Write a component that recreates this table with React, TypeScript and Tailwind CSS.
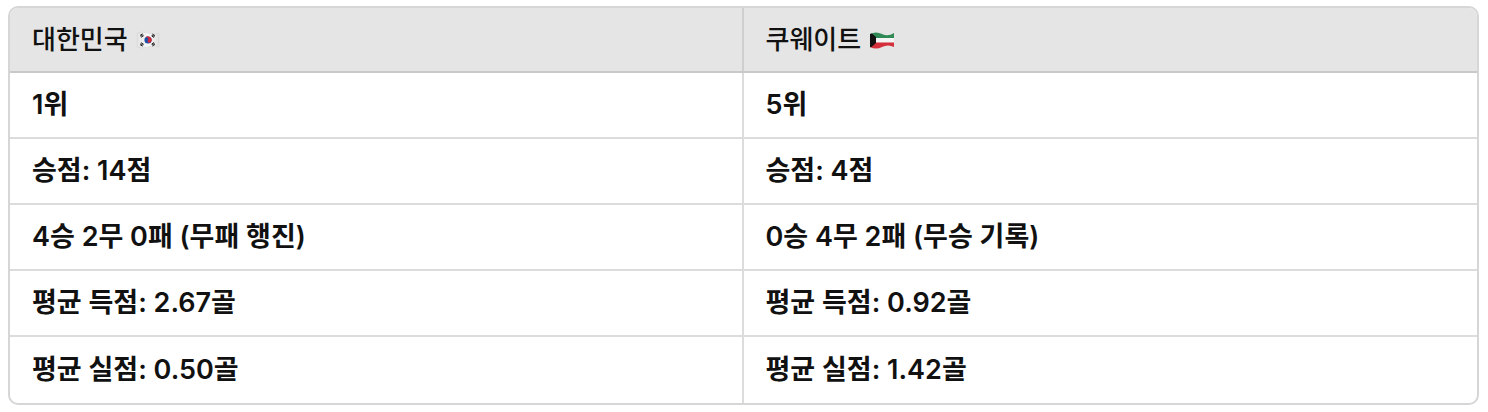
import React from "react";

const KoreaFlag = () => (
  <svg width="24" height="18" viewBox="0 0 24 18" className="inline-block">
    <defs>
      <linearGradient id="shadeK" x1="0" x2="1" y1="0" y2="0">
        <stop offset="0" stopColor="#000" stopOpacity="0.08" />
        <stop offset="0.5" stopColor="#000" stopOpacity="0" />
        <stop offset="1" stopColor="#000" stopOpacity="0.1" />
      </linearGradient>
    </defs>
    <path d="M1 2 Q6 0 12 2 T23 2 L23 16 Q18 14 12 16 T1 16 Z" fill="#f7f7f7" stroke="#d8d8d8" strokeWidth="0.5" />
    <circle cx="12" cy="9" r="3.6" fill="#1f4fa8" />
    <path d="M8.4 9 A3.6 3.6 0 0 1 15.6 9 A1.8 1.8 0 0 1 12 9 A1.8 1.8 0 0 0 8.4 9 Z" fill="#d62a36" transform="rotate(30 12 9)" />
    <g stroke="#222" strokeWidth="1">
      <path d="M4 4.5 L6.5 2.8 M4.6 5.4 L7.1 3.7 M5.2 6.3 L7.7 4.6" />
      <path d="M16.5 3 L19 4.7 M16 3.9 L18.5 5.6 M15.5 4.8 L18 6.5" />
      <path d="M4 13.5 L6.5 15.2 M4.6 12.6 L7.1 14.3 M5.2 11.7 L7.7 13.4" />
      <path d="M16.5 15 L19 13.3 M16 14.1 L18.5 12.4 M15.5 13.2 L18 11.5" />
    </g>
    <path d="M1 2 Q6 0 12 2 T23 2 L23 16 Q18 14 12 16 T1 16 Z" fill="url(#shadeK)" />
  </svg>
);

const KuwaitFlag = () => (
  <svg width="26" height="18" viewBox="0 0 26 18" className="inline-block">
    <defs>
      <clipPath id="kwClip">
        <path d="M1 3 Q7 0 13 3 T25 2 L25 16 Q19 13 13 16 T1 16 Z" />
      </clipPath>
    </defs>
    <g clipPath="url(#kwClip)">
      <rect x="0" y="0" width="26" height="7" fill="#2f8a55" />
      <rect x="0" y="7" width="26" height="4.5" fill="#f5f5f5" />
      <rect x="0" y="11.5" width="26" height="7" fill="#d3303c" />
      <path d="M0 0 L7 6 L7 12 L0 18 Z" fill="#111" />
    </g>
  </svg>
);

const rows: [string, string][] = [
  ["1위", "5위"],
  ["승점: 14점", "승점: 4점"],
  ["4승 2무 0패 (무패 행진)", "0승 4무 2패 (무승 기록)"],
  ["평균 득점: 2.67골", "평균 득점: 0.92골"],
  ["평균 실점: 0.50골", "평균 실점: 1.42골"],
];

export default function App() {
  return (
    <div
      className="w-[1488px] h-[412px] bg-white pt-[6px] px-[8px]"
      style={{ fontFamily: 'Inter, "Noto Sans CJK KR", sans-serif' }}
    >
      <div className="w-[1471px] rounded-[10px] border-2 border-[#d6d6d6] overflow-hidden">
        <div className="grid grid-cols-2 h-[65px] bg-[#e5e5e5] border-b-2 border-[#c9c9c9] text-[26px] text-[#111] font-medium">
          <div className="flex items-center gap-[8px] pl-[22px] border-r-2 border-[#cfcfcf]">
            <span>대한민국</span>
            <KoreaFlag />
          </div>
          <div className="flex items-center gap-[8px] pl-[22px]">
            <span>쿠웨이트</span>
            <KuwaitFlag />
          </div>
        </div>
        {rows.map((r, i) => (
          <div
            key={i}
            className={`grid grid-cols-2 h-[66px] text-[27px] font-semibold text-[#111] ${i < rows.length - 1 ? "border-b-2 border-[#dcdcdc]" : ""}`}
          >
            <div className="flex items-center pl-[22px] border-r-2 border-[#dcdcdc]">{r[0]}</div>
            <div className="flex items-center pl-[22px]">{r[1]}</div>
          </div>
        ))}
      </div>
    </div>
  );
}
